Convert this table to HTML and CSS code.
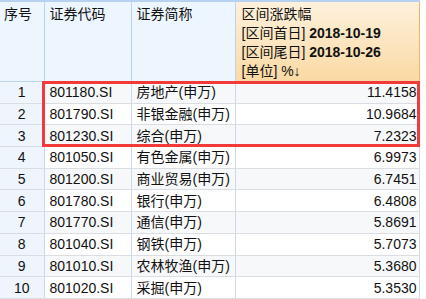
FILE: index.html
```html
<!DOCTYPE html>
<html lang="zh-CN">
<head>
  <meta charset="UTF-8" />
  <title>区间涨跌幅</title>
  <link rel="stylesheet" href="styles.css">
</head>
<body>
  <div class="sheet">
    <table class="grid">
      <colgroup>
        <col class="c-no">
        <col class="c-code">
        <col class="c-name">
        <col class="c-val">
      </colgroup>
      <thead>
        <tr>
          <th class="h-no">序号</th>
          <th>证券代码</th>
          <th>证券简称</th>
          <th class="h-sort">
            区间涨跌幅<br>
            [区间首日] <b>2018-10-19</b><br>
            [区间尾日] <b>2018-10-26</b><br>
            [单位] %↓
          </th>
        </tr>
      </thead>
      <tbody>
        <tr><td class="no">1</td><td>801180.SI</td><td>房地产(申万)</td><td class="num">11.4158</td></tr>
        <tr><td class="no">2</td><td>801790.SI</td><td>非银金融(申万)</td><td class="num">10.9684</td></tr>
        <tr><td class="no">3</td><td>801230.SI</td><td>综合(申万)</td><td class="num">7.2323</td></tr>
        <tr><td class="no">4</td><td>801050.SI</td><td>有色金属(申万)</td><td class="num">6.9973</td></tr>
        <tr><td class="no">5</td><td>801200.SI</td><td>商业贸易(申万)</td><td class="num">6.7451</td></tr>
        <tr><td class="no">6</td><td>801780.SI</td><td>银行(申万)</td><td class="num">6.4808</td></tr>
        <tr><td class="no">7</td><td>801770.SI</td><td>通信(申万)</td><td class="num">5.8691</td></tr>
        <tr><td class="no">8</td><td>801040.SI</td><td>钢铁(申万)</td><td class="num">5.7073</td></tr>
        <tr><td class="no">9</td><td>801010.SI</td><td>农林牧渔(申万)</td><td class="num">5.3680</td></tr>
        <tr><td class="no">10</td><td>801020.SI</td><td>采掘(申万)</td><td class="num">5.3530</td></tr>
      </tbody>
    </table>
    <!-- highlight over top 3 rows -->
    <div class="mark"></div>
  </div>
</body>
</html>
```

FILE: styles.css
```css
body {
  margin: 0;
  background: #fff;
  font-family: "Liberation Sans", "Noto Sans CJK SC", sans-serif;
  font-size: 14px;
  color: #111;
}

.sheet {
  position: relative;
  width: 419px;
}

.grid {
  border-collapse: collapse;
  table-layout: fixed;
  width: 419px;
}

.c-no { width: 44px; }
.c-code { width: 87px; }
.c-name { width: 104px; }
.c-val { width: 184px; }

.grid th {
  padding: 3px 4px 0 5px;
  vertical-align: top;
  text-align: left;
  font-weight: normal;
  line-height: 19px;
  background: #edf5fe;
  border-top: 2px solid #b7d1f0;
  border-right: 1px solid #bcd3ec;
  border-bottom: 1px solid #bcd3ec;
  white-space: nowrap;
}

.grid th.h-no {
  padding-left: 4px;
}

.grid th.h-sort {
  padding-left: 6px;
  background: linear-gradient(#fdf1dc, #fad9a3);
  border-right: 1px solid #f2b563;
}

.grid th b {
  font-weight: bold;
}

.grid td {
  height: 20.7px;
  padding: 0 5px;
  line-height: 20px;
  white-space: nowrap;
  overflow: hidden;
  border-right: 1px solid #c9d9eb;
  border-bottom: 1px solid #dadde2;
}

.grid tbody tr:nth-child(odd) td {
  background: #f7f8f9;
}

.grid td.no {
  text-align: center;
  padding: 0;
  background: #eef5fc !important;
}

.grid td.num {
  text-align: right;
  padding-right: 2px;
  border-right: 1px solid #d4d9df;
}

.mark {
  position: absolute;
  left: 42px;
  top: 81px;
  width: 372px;
  height: 60px;
  border: 3px solid #f23a3a;
}
```
